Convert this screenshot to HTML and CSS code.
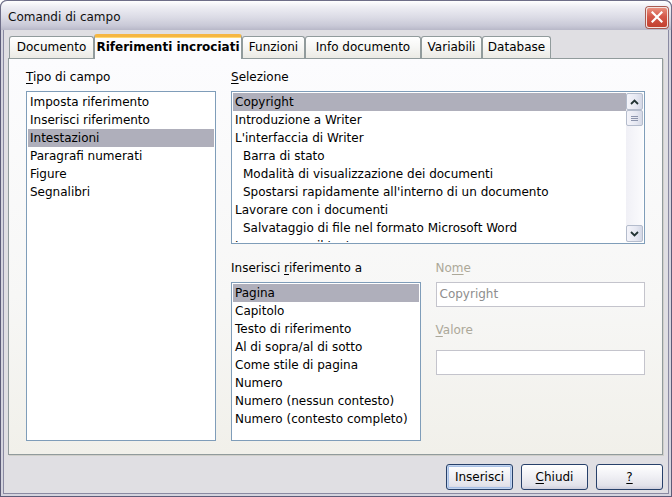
FILE: index.html
```html
<!DOCTYPE html>
<html lang="it">
<head>
<meta charset="utf-8">
<title>Comandi di campo</title>
<link rel="stylesheet" href="styles.css">
</head>
<body>
<div class="window">
  <div class="titlebar">
    <span class="title">Comandi di campo</span>
    <span class="close">
      <svg width="12" height="12" viewBox="0 0 12 12"><path d="M1.5 1.5 L10.5 10.5 M10.5 1.5 L1.5 10.5" stroke="#fff" stroke-width="2.2" stroke-linecap="square"/></svg>
    </span>
  </div>
  <div class="client">
    <div class="tabs">
      <div class="tab tab-doc">Documento</div>
      <div class="tab active tab-rif">Riferimenti incrociati</div>
      <div class="tab tab-fun">Funzioni</div>
      <div class="tab tab-info">Info documento</div>
      <div class="tab tab-var">Variabili</div>
      <div class="tab tab-db">Database</div>
    </div>
    <div class="panel">
      <div class="col-left">
        <div class="label"><u>T</u>ipo di campo</div>
        <div class="list list-type">
          <div class="item">Imposta riferimento</div>
          <div class="item">Inserisci riferimento</div>
          <div class="item selected">Intestazioni</div>
          <div class="item">Paragrafi numerati</div>
          <div class="item">Figure</div>
          <div class="item">Segnalibri</div>
        </div>
      </div>
      <div class="col-right">
        <div class="label"><u>S</u>elezione</div>
        <div class="list list-sel">
          <div class="items">
            <div class="item selected">Copyright</div>
            <div class="item">Introduzione a Writer</div>
            <div class="item">L'interfaccia di Writer</div>
            <div class="item sub">Barra di stato</div>
            <div class="item sub">Modalità di visualizzazione dei documenti</div>
            <div class="item sub">Spostarsi rapidamente all'interno di un documento</div>
            <div class="item">Lavorare con i documenti</div>
            <div class="item sub">Salvataggio di file nel formato Microsoft Word</div>
            <div class="item">Lavorare con il testo</div>
          </div>
          <div class="scrollbar">
            <div class="sb-btn">
              <svg width="9" height="6" viewBox="0 0 9 6"><path d="M1 5 L4.5 1.5 L8 5" fill="none" stroke="#233" stroke-width="1.8"/></svg>
            </div>
            <div class="sb-thumb">
              <svg width="7" height="7" viewBox="0 0 7 7"><path d="M0 1.5 H7 M0 3.5 H7 M0 5.5 H7" stroke="#8c94ac" stroke-width="1"/></svg>
            </div>
            <div class="sb-track"></div>
            <div class="sb-btn">
              <svg width="9" height="6" viewBox="0 0 9 6"><path d="M1 1 L4.5 4.5 L8 1" fill="none" stroke="#233" stroke-width="1.8"/></svg>
            </div>
          </div>
        </div>
        <div class="lower">
          <div class="lower-left">
            <div class="label">Inserisci <u>r</u>iferimento a</div>
            <div class="list list-ref">
              <div class="item selected">Pagina</div>
              <div class="item">Capitolo</div>
              <div class="item">Testo di riferimento</div>
              <div class="item">Al di sopra/al di sotto</div>
              <div class="item">Come stile di pagina</div>
              <div class="item">Numero</div>
              <div class="item">Numero (nessun contesto)</div>
              <div class="item">Numero (contesto completo)</div>
            </div>
          </div>
          <div class="lower-right">
            <div class="label disabled">No<u>m</u>e</div>
            <div class="input">Copyright</div>
            <div class="label disabled label-valore"><u>V</u>alore</div>
            <div class="input"></div>
          </div>
        </div>
      </div>
    </div>
    <div class="buttons">
      <div class="btn default">Inserisci</div>
      <div class="btn"><u>C</u>hiudi</div>
      <div class="btn"><u>?</u></div>
    </div>
  </div>
</div>
</body>
</html>
```

FILE: styles.css
```css
* { box-sizing: border-box; }
html, body {
  margin: 0;
  padding: 0;
  background: #ffffff;
}
body {
  font-family: "DejaVu Sans", "Liberation Sans", sans-serif;
  font-size: 12px;
  color: #000;
}
u { text-decoration: underline; text-underline-offset: 2px; }

.window {
  width: 672px;
  height: 497px;
  display: flex;
  flex-direction: column;
  background: #d4d4de;
  border: 1px solid #5c5c78;
  border-top: none;
  border-radius: 7px 7px 0 0;
}

.titlebar {
  height: 30px;
  margin: 0 -1px;
  border: 1px solid #6e6e88;
  border-bottom: none;
  border-radius: 7px 7px 0 0;
  background: linear-gradient(to bottom, #ffffff 0%, #eeeef4 20%, #dcdce6 55%, #c9c9d7 85%, #b8b8c8 100%);
  display: flex;
  align-items: center;
  justify-content: space-between;
  padding: 0 3px 0 7px;
  flex: none;
}
.title {
  font-size: 12px;
  color: #101010;
  padding-top: 2px;
}
.close {
  width: 22px;
  height: 21px;
  margin-top: 3px;
  border: 1px solid #f4e4e0;
  border-radius: 3px;
  background: linear-gradient(to bottom, #e8907e 0%, #d4584a 45%, #c2402f 100%);
  box-shadow: 0 0 0 1px #a85a50;
  display: flex;
  align-items: center;
  justify-content: center;
}

.client {
  flex: 1;
  margin: 0 2px 2px;
  border: 1px solid #8a8aa2;
  border-top: none;
  background: #e0dfe3;
  padding: 4px 5px 0 4px;
  display: flex;
  flex-direction: column;
}

.tabs {
  display: flex;
  align-items: flex-end;
  height: 24px;
  padding-left: 1px;
  position: relative;
  z-index: 1;
}
.tab {
  height: 22px;
  line-height: 20px;
  text-align: center;
  border: 1px solid #919b9c;
  border-bottom: none;
  border-radius: 3px 3px 0 0;
  background: linear-gradient(to bottom, #ffffff 0%, #f6f6f4 50%, #ebeae4 100%);
  white-space: nowrap;
}
.tab-doc { width: 85px; }
.tab-rif { width: 148px; }
.tab-fun { width: 63px; }
.tab-info { width: 116px; }
.tab-var { width: 61px; }
.tab-db { width: 69px; }
.tab.active {
  height: 25px;
  margin-bottom: -1px;
  font-weight: bold;
  line-height: 21px;
  background: #fcfcfe;
  border-top: 3px solid #f5b642;
  border-radius: 3px 3px 0 0;
  box-shadow: inset 0 1px 0 #ffd873;
  position: relative;
  z-index: 2;
}

.panel {
  height: 397px;
  border: 1px solid #919b9c;
  background: linear-gradient(to bottom, #fcfcfe 0%, #f7f7f6 60%, #f1f0ea 100%);
  box-shadow: 1px 1px 0 #d0cfca;
  padding: 10px 16px 13px 17px;
  display: flex;
  gap: 15px;
}

.label {
  height: 16px;
  line-height: 16px;
  margin-bottom: 6px;
  white-space: nowrap;
}
.label.disabled { color: #aca899; }

.list {
  background: #fff;
  border: 1px solid #7f9db9;
  padding: 1px;
  overflow: hidden;
}
.item {
  height: 18px;
  line-height: 18px;
  padding-left: 2px;
  white-space: nowrap;
}
.item.selected { background: #afafbb; }
.item.sub { padding-left: 10px; }

.col-left { width: 190px; display: flex; flex-direction: column; }
.list-type { height: 350px; }

.col-right { width: 414px; display: flex; flex-direction: column; }
.list-sel {
  height: 153px;
  display: flex;
}
.list-sel .items { flex: 1; overflow: hidden; }

.scrollbar {
  width: 17px;
  display: flex;
  flex-direction: column;
  background: linear-gradient(to right, #f0f0f6, #fbfbfd);
}
.sb-btn, .sb-thumb {
  height: 17px;
  border: 1px solid #b4bccc;
  border-radius: 2px;
  background: linear-gradient(to right, #f4f4fa 0%, #e6e8f2 60%, #d4d8e6 100%);
  display: flex;
  align-items: center;
  justify-content: center;
}
.sb-thumb { height: 16px; }
.sb-track { flex: 1; }

.lower {
  display: flex;
  gap: 15px;
  margin-top: 16px;
}
.lower .label { margin-bottom: 6px; }
.lower-left { width: 190px; }
.list-ref { height: 159px; }
.lower-right { width: 210px; }
.input {
  height: 25px;
  border: 1px solid #c4c4cc;
  background: #fff;
  color: #8e8e8e;
  line-height: 23px;
  padding-left: 3px;
}
.lower .label-valore { margin-top: 15px; margin-bottom: 12px; }

.buttons {
  display: flex;
  justify-content: flex-end;
  gap: 8px;
  margin-top: 9px;
}
.btn {
  width: 67px;
  height: 26px;
  border: 1px solid #27406a;
  border-radius: 3px;
  background: linear-gradient(to bottom, #ffffff 0%, #f2f2f6 40%, #e2e2ea 85%, #cfcfdc 100%);
  text-align: center;
  line-height: 24px;
}
.btn.default {
  box-shadow: inset 0 0 0 1px #c2d4ee, inset 0 0 0 2px #a8c0e6;
}
```
